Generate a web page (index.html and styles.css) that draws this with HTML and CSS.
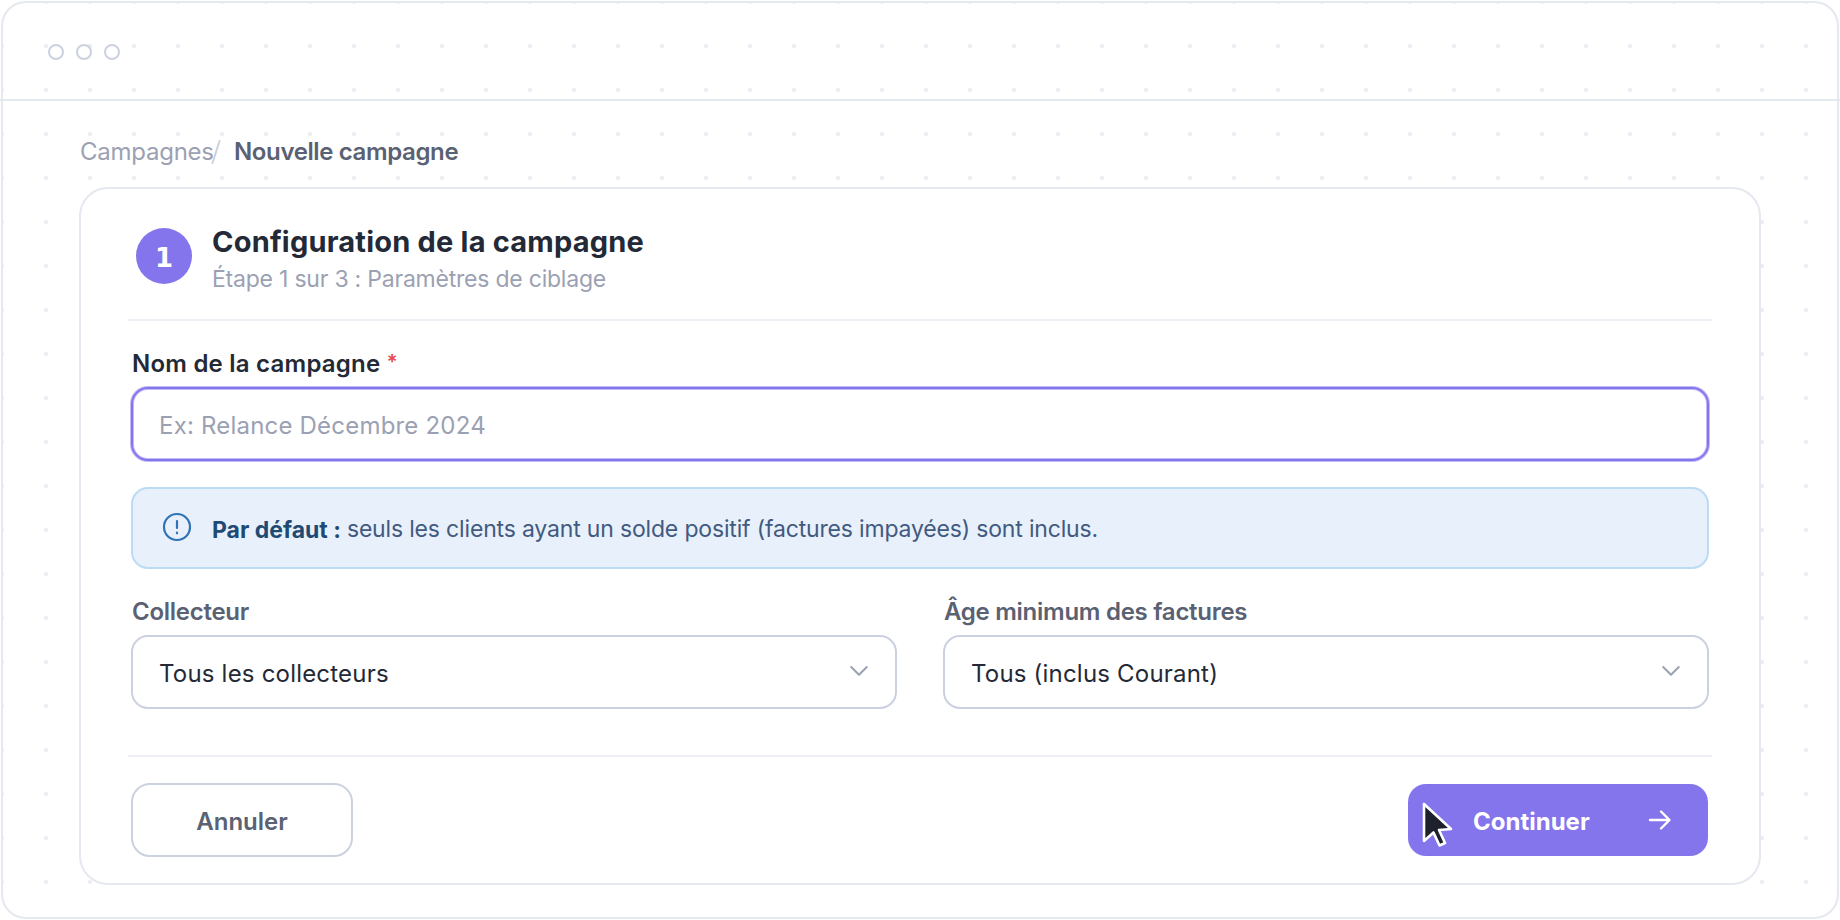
FILE: index.html
```html
<!DOCTYPE html>
<html lang="fr">
<head>
    <meta charset="UTF-8">
    <title>Nouvelle campagne</title>
    <link rel="stylesheet" href="styles.css">
</head>
<body>
<div class="window">
    <div class="window-bar">
        <span class="dot"></span>
        <span class="dot"></span>
        <span class="dot"></span>
    </div>

    <div class="breadcrumb">
        <span class="crumb">Campagnes</span>
        <svg class="slash" width="10" height="26" viewBox="0 0 10 26"><path d="M1.500 24L8.500 2"/></svg>
        <span class="current">Nouvelle campagne</span>
    </div>

    <div class="card">
        <div class="card-head">
            <div class="step">1</div>
            <div class="titles">
                <h1>Configuration de la campagne</h1>
                <p>Étape 1 sur 3 : Paramètres de ciblage</p>
            </div>
        </div>

        <div class="form">
            <div class="label main">Nom de la campagne <span class="star">*</span></div>
            <div class="field focus"><span class="placeholder">Ex: Relance Décembre 2024</span></div>

            <div class="info">
                <svg class="info-icon" width="30" height="30" viewBox="0 0 30 30">
                    <circle cx="15" cy="15" r="13"/>
                    <path d="M15 9v7M15 20.7v.6"/>
                </svg>
                <strong>Par défaut :</strong>
                <span class="info-text">seuls les clients ayant un solde positif (factures impayées) sont inclus.</span>
            </div>

            <div class="row">
                <div class="col">
                    <div class="label">Collecteur</div>
                    <div class="field">
                        <span>Tous les collecteurs</span>
                        <svg class="chevron" width="20" height="12" viewBox="0 0 20 12"><path d="M2.200 2L10 9.800 17.800 2"/></svg>
                    </div>
                </div>
                <div class="col">
                    <div class="label">Âge minimum des factures</div>
                    <div class="field">
                        <span>Tous (inclus Courant)</span>
                        <svg class="chevron" width="20" height="12" viewBox="0 0 20 12"><path d="M2.200 2L10 9.800 17.800 2"/></svg>
                    </div>
                </div>
            </div>
        </div>

        <div class="card-foot">
            <div class="btn cancel">Annuler</div>
            <div class="btn next">
                <span>Continuer</span>
                <svg class="arrow" width="24" height="22" viewBox="0 0 24 22"><path d="M2 11h19M13 2.500l8.500 8.500-8.500 8.500"/></svg>
                <svg class="cursor" width="34" height="50" viewBox="0 0 34 50"><path d="M3 3v37l9.500-8.500 6 13 5.500-2.500-6-13 12-1z"/></svg>
            </div>
        </div>
    </div>
</div>
</body>
</html>
```
FILE: styles.css
```css
*{margin: 0;padding: 0;box-sizing: border-box;}
body{
    background: #fff;
    font-family: Inter, "Liberation Sans", sans-serif;
    font-size: 24px;
    line-height: 32px;
    color: #232936;
    overflow: hidden;
}
span, strong{white-space: nowrap;}
svg{
    display: block;
    fill: none;
    stroke-linecap: round;
    stroke-linejoin: round;
}
.window{
    margin: 1px;
    height: 918px;
    border: 2px solid #e4e8ef;
    border-radius: 25px;
    background: #fff radial-gradient(circle, #ebecf4 1.8px, rgba(235, 236, 244, 0) 2.4px) 21px 21px / 44px 44px;
}
.window-bar{
    display: flex;
    gap: 12px;
    height: 98px;
    margin: 0 -3px;
    padding: 41px 48px 0;
    border-bottom: 2px solid #e4e8ef;
}
.dot{
    width: 16px;
    height: 16px;
    border: 2px solid #cbd1df;
    border-radius: 50%;
    background: #fff;
}
/* fil d'ariane */
.breadcrumb{
    display: flex;
    height: 86px;
    padding: 35px 76px 0 77px;
}
.crumb{
    width: 131px;
    letter-spacing: -.25px;
    color: #9ba1b3;
}
.slash{
    margin-top: 3px;
    stroke: #cbd1df;
    stroke-width: 2;
}
.current{
    margin-left: 13px;
    font-weight: 600;
    letter-spacing: -.38px;
    color: #5a6172;
}
.card{
    height: 698px;
    margin: 0 76px;
    padding: 0 47px;
    border: 2px solid #e5e8f0;
    border-radius: 29px;
    background: #fff;
}
.card-head{
    display: flex;
    gap: 20px;
    height: 132px;
    padding-left: 8px;
    border-bottom: 2px solid #eeeff5;
}
.step{
    width: 56px;
    height: 56px;
    margin-top: 39px;
    border-radius: 50%;
    background: #8575ed;
    color: #fff;
    font: bold 26px/60px "DejaVu Sans", sans-serif;
    text-align: center;
}
.titles{padding-top: 33px;}
.titles h1{
    font-size: 29px;
    line-height: 40px;
    font-weight: 700;
    letter-spacing: .2px;
}
.titles p{
    margin-top: 1px;
    font-size: 23px;
    letter-spacing: -.22px;
    color: #9ba1b3;
}
.form{padding: 27px 3px 46px;}
.label{
    margin-bottom: 7px;
    padding-left: 1px;
    font-weight: 600;
    letter-spacing: -.27px;
    color: #5a6172;
}
.main{
    letter-spacing: .23px;
    color: #232936;
}
.star{
    font-size: 20px;
    line-height: 20px;
    vertical-align: 3px;
    color: #e5484d;
}
.field{
    display: flex;
    align-items: center;
    justify-content: space-between;
    height: 74px;
    padding: 4px 26px 0 26px;
    border: 2px solid #cbd1e0;
    border-radius: 17px;
    background: #fff;
    letter-spacing: .2px;
}
.focus{
    border-color: #8575ed;
    box-shadow: 0 0 0 1px rgba(133, 117, 237, .5), inset 0 0 0 1px rgba(133, 117, 237, .5);
}
.placeholder{color: #9ba1b3;}
.chevron{
    margin-top: -7px;
    stroke: #9aa2b3;
    stroke-width: 2;
}
.info{
    display: flex;
    height: 82px;
    margin: 26px 0 27px;
    padding: 23px 29px;
    border: 2px solid #bbdbf3;
    border-radius: 17px;
    background: #e8f0fb;
    font-size: 23px;
    color: #425a80;
}
.info-icon{
    margin-right: 20px;
    stroke: #2f72b5;
    stroke-width: 2.2;
}
.info strong{
    margin: 2px 6px 0 0;
    font-weight: 700;
    color: #1f4a73;
}
.info-text{
    margin-top: 1px;
    letter-spacing: -.17px;
}
.row{
    display: flex;
    gap: 46px;
}
.col{flex: 1;}
.card-foot{
    display: flex;
    justify-content: space-between;
    padding: 26px 3px 0;
    border-top: 2px solid #eeeff5;
}
.btn{
    display: flex;
    align-items: center;
    font-weight: 600;
}
.cancel{
    justify-content: center;
    width: 222px;
    height: 74px;
    padding-top: 4px;
    border: 2px solid #cbd1df;
    border-radius: 19px;
    color: #5a6172;
}
.next{
    position: relative;
    justify-content: space-between;
    width: 300px;
    height: 72px;
    margin: 1px 1px 0 0;
    padding: 4px 36px 0 65px;
    border-radius: 18px;
    background: #8575ed;
    color: #fff;
    font-weight: 700;
}
.arrow{
    margin-top: -4px;
    stroke: #fff;
    stroke-width: 2.4;
}
/* pointeur au-dessus du bouton */
.cursor{
    position: absolute;
    left: 13px;
    top: 17px;
    fill: #1c212c;
    stroke: #fff;
    stroke-width: 2.6;
}
```
